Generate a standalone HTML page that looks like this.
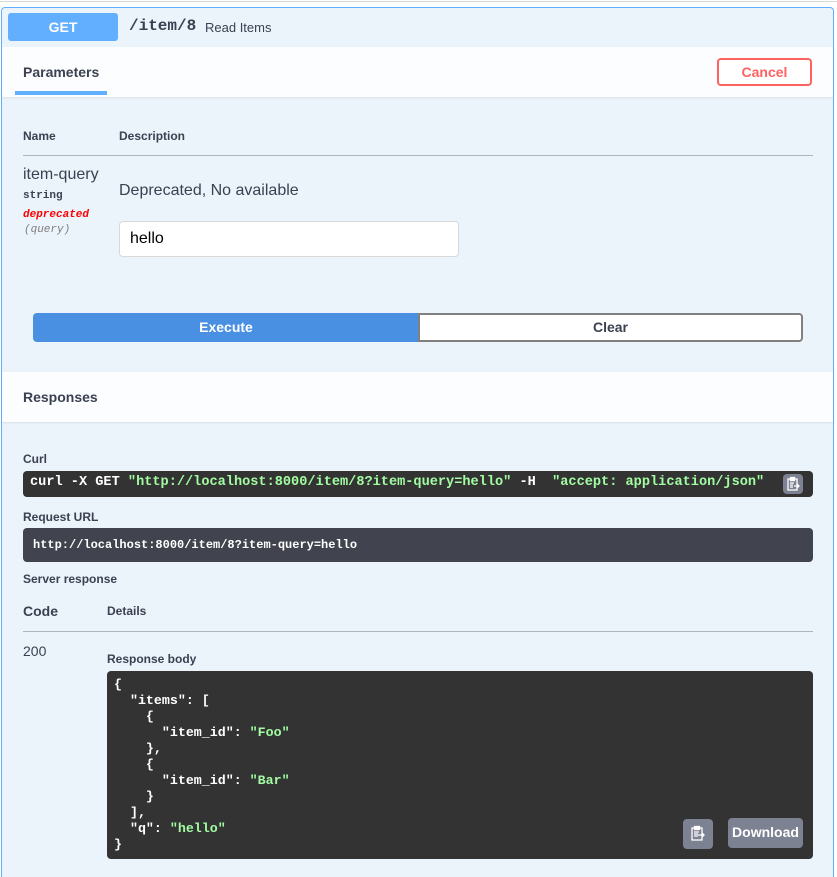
<!DOCTYPE html>
<html><head><style>
*{box-sizing:border-box;margin:0;padding:0}
body{width:837px;height:865px;overflow:hidden;background:#fff;font-family:"Liberation Sans",sans-serif;color:#3b4151;position:relative}
.a{position:absolute}
.mono{font-family:"Liberation Mono",monospace}
</style></head><body>
<div class="a" style="left:0;top:1px;width:837px;height:1px;background:#d8d8d8"></div>
<div class="a" style="left:1px;top:7px;width:833px;height:870px;border:1px solid #61affe;border-bottom:none;border-radius:4px 4px 0 0;background:#ebf3fb"></div>
<div class="a" style="left:8px;top:13px;width:110px;height:28px;background:#61affe;border-radius:3px;color:#fff;font-weight:bold;font-size:14px;text-align:center;line-height:28px">GET</div>
<div class="a mono" style="left:129px;top:17px;font-size:16px;font-weight:bold;color:#3b4151">/item/8</div>
<div class="a" style="left:205px;top:20px;font-size:13px;color:#3b4151">Read Items</div>
<div class="a" style="left:2px;top:47px;width:831px;height:50px;background:#fff;opacity:.85;box-shadow:0 1px 2px rgba(0,0,0,.1)"></div>
<div class="a" style="left:23px;top:64px;font-size:14px;font-weight:bold">Parameters</div>
<div class="a" style="left:15px;top:91px;width:92px;height:4px;background:#61affe"></div>
<div class="a" style="left:717px;top:58px;width:95px;height:28px;border:2px solid #ff6060;border-radius:4px;color:#ff6060;font-weight:bold;font-size:14px;text-align:center;line-height:24px;background:#fff">Cancel</div>
<div class="a" style="left:23px;top:129px;font-size:12px;font-weight:bold">Name</div>
<div class="a" style="left:119px;top:129px;font-size:12px;font-weight:bold">Description</div>
<div class="a" style="left:23px;top:155px;width:790px;height:1px;background:#b0b4bb"></div>
<div class="a" style="left:23px;top:166px;font-size:16px">item-query</div>
<div class="a mono" style="left:23px;top:190px;font-size:11px;font-weight:bold">string</div>
<div class="a mono" style="left:23px;top:209px;font-size:11px;font-weight:bold;font-style:italic;color:#f00">deprecated</div>
<div class="a mono" style="left:24px;top:224px;font-size:11px;font-style:italic;color:#808080">(query)</div>
<div class="a" style="left:119px;top:182px;font-size:16px">Deprecated, No available</div>
<div class="a" style="left:119px;top:221px;width:340px;height:36px;background:#fff;border:1px solid #d9d9d9;border-radius:4px;font-size:16px;color:#000;padding:8px 10px">hello</div>
<div class="a" style="left:33px;top:313px;width:386px;height:29px;background:#4990e2;border-radius:4px 0 0 4px;color:#fff;font-weight:bold;font-size:14px;text-align:center;line-height:29px">Execute</div>
<div class="a" style="left:418px;top:313px;width:385px;height:29px;background:#fff;border:2px solid #808080;border-radius:0 4px 4px 0;font-weight:bold;font-size:14px;text-align:center;line-height:25px">Clear</div>
<div class="a" style="left:2px;top:372px;width:831px;height:50px;background:#fff;opacity:.85;box-shadow:0 1px 2px rgba(0,0,0,.1)"></div>
<div class="a" style="left:23px;top:389px;font-size:14px;font-weight:bold">Responses</div>
<div class="a" style="left:23px;top:452px;font-size:12px;font-weight:bold">Curl</div>
<div class="a mono" style="left:23px;top:471px;width:790px;height:26px;background:#333;border-radius:4px;color:#fff;font-size:13.6px;font-weight:bold;padding:4px 7px;white-space:pre">curl -X GET <span style="color:#a2fca2">"http://localhost:8000/item/8?item-query=hello"</span> -H  <span style="color:#a2fca2">"accept: application/json"</span></div>
<div class="a" style="left:783px;top:474px;width:20px;height:20px;background:#7d8293;border-radius:4px"><svg width="20" height="20" viewBox="0 0 20 20" fill="none" stroke="#fff" stroke-width="1.3"><rect x="5" y="5" width="9" height="11"/><rect x="7.5" y="3.5" width="4" height="3" fill="#fff"/><path d="M7 9h4M7 11h3M7 13h3M11 12h5M14 10l2 2-2 2"/></svg></div>
<div class="a" style="left:23px;top:510px;font-size:12px;font-weight:bold">Request URL</div>
<div class="a mono" style="left:23px;top:528px;width:790px;height:34px;background:#41444e;border-radius:4px;color:#fff;font-size:12px;font-weight:bold;padding:10px 10px">http://localhost:8000/item/8?item-query=hello</div>
<div class="a" style="left:23px;top:572px;font-size:12px;font-weight:bold">Server response</div>
<div class="a" style="left:23px;top:603px;font-size:14px;font-weight:bold">Code</div>
<div class="a" style="left:107px;top:604px;font-size:12px;font-weight:bold">Details</div>
<div class="a" style="left:23px;top:631px;width:790px;height:1px;background:#b0b4bb"></div>
<div class="a" style="left:23px;top:643px;font-size:14px">200</div>
<div class="a" style="left:107px;top:652px;font-size:12px;font-weight:bold">Response body</div>
<div class="a mono" style="left:107px;top:671px;width:706px;height:188px;background:#333;border-radius:4px;color:#fff;font-size:13.3px;font-weight:bold;padding:6px 7px;line-height:16px;white-space:pre">{
  "items": [
    {
      "item_id": <span style="color:#a2fca2">"Foo"</span>
    },
    {
      "item_id": <span style="color:#a2fca2">"Bar"</span>
    }
  ],
  "q": <span style="color:#a2fca2">"hello"</span>
}</div>
<div class="a" style="left:683px;top:819px;width:30px;height:30px;background:#7d8293;border-radius:4px"><svg width="30" height="30" viewBox="0 0 30 30" fill="none" stroke="#fff" stroke-width="1.3"><rect x="9" y="9" width="10" height="12"/><rect x="11.5" y="7.5" width="5" height="3" fill="#fff"/><path d="M11 13h5M11 15h4M11 17h4M15 16h6M19 14l2 2-2 2"/></svg></div>
<div class="a" style="left:728px;top:818px;width:75px;height:30px;background:#7d8293;border-radius:4px;color:#fff;font-weight:bold;font-size:14px;text-align:center;line-height:28px">Download</div>
</body></html>
